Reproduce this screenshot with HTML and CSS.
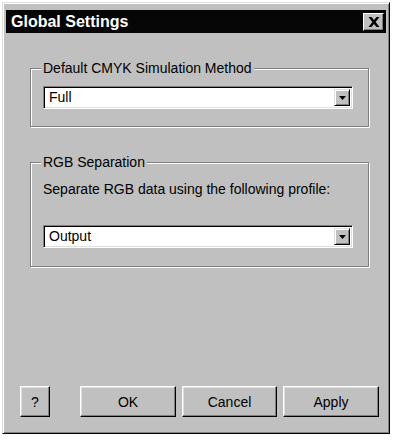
FILE: index.html
```html
<!DOCTYPE html>
<html>
<head>
<meta charset="utf-8">
<link rel="stylesheet" href="styles.css">
</head>
<body>
<div class="window">
  <div class="titlebar">
    <span class="title">Global Settings</span>
    <button class="close" type="button">
      <svg width="12" height="10" viewBox="0 0 12 10"><path d="M0.5 0h3l2.5 3 2.5-3h3L7.6 5l3.9 5h-3L6 7 3.5 10h-3l3.9-5z" fill="#000"/></svg>
    </button>
  </div>
  <div class="body">
    <div class="group g1">
      <span class="legend">Default CMYK Simulation Method</span>
      <div class="combo">
        <span class="value">Full</span>
        <span class="arrow"><svg width="7" height="4" viewBox="0 0 7 4"><path d="M0 0h7L3.5 4z" fill="#000"/></svg></span>
      </div>
    </div>
    <div class="group g2">
      <span class="legend">RGB Separation</span>
      <p class="desc">Separate RGB data using the following profile:</p>
      <div class="combo">
        <span class="value">Output</span>
        <span class="arrow"><svg width="7" height="4" viewBox="0 0 7 4"><path d="M0 0h7L3.5 4z" fill="#000"/></svg></span>
      </div>
    </div>
    <div class="buttons">
      <button class="btn help" type="button">?</button>
      <button class="btn ok" type="button">OK</button>
      <button class="btn cancel" type="button">Cancel</button>
      <button class="btn apply" type="button">Apply</button>
    </div>
  </div>
</div>
</body>
</html>
```
FILE: styles.css
```css
html, body {
  margin: 0;
  padding: 0;
  background: #fff;
}
body {
  font-family: "Liberation Sans", Arial, sans-serif;
  font-size: 14px;
  color: #000;
}
.window {
  margin: 2px 0 0 2px;
  width: 388px;
  height: 432px;
  box-sizing: border-box;
  background: #c0c0c0;
  border-top: 1px solid #dfdfdf;
  border-left: 1px solid #dfdfdf;
  border-right: 1px solid #000;
  border-bottom: 1px solid #000;
  box-shadow: inset 1px 1px 0 #fff, inset -1px -1px 0 #808080;
  padding: 7px 3px 3px 3px;
  display: flex;
  flex-direction: column;
}
.titlebar {
  height: 23px;
  background: #060606;
  display: flex;
  align-items: center;
  justify-content: space-between;
  padding: 0 2px 0 5px;
}
.title {
  color: #fff;
  font-weight: bold;
  font-size: 16px;
}
.close {
  width: 21px;
  height: 18px;
  padding: 0;
  margin: 0;
  background: #c0c0c0;
  border-top: 1px solid #fff;
  border-left: 1px solid #fff;
  border-right: 1px solid #000;
  border-bottom: 1px solid #000;
  box-shadow: inset -1px -1px 0 #808080;
  display: flex;
  align-items: center;
  justify-content: center;
}
.body {
  flex: 1;
  display: flex;
  flex-direction: column;
  padding: 0 17px 0 24px;
}
.group {
  position: relative;
  border: 1px solid #808080;
  box-shadow: 1px 1px 0 #fff, inset 1px 1px 0 #fff;
  padding: 0 15px 0 12px;
  box-sizing: border-box;
}
.g1 {
  margin-top: 35px;
  height: 59px;
  padding-top: 17px;
}
.g2 {
  margin-top: 35px;
  height: 105px;
  padding-top: 18px;
}
.legend {
  position: absolute;
  top: -9px;
  left: 10px;
  padding: 0 2px;
  background: #c0c0c0;
  line-height: 16px;
}
.desc {
  margin: 0 0 28px 0;
  line-height: 16px;
  height: 16px;
}
.combo {
  height: 23px;
  box-sizing: border-box;
  background: #fff;
  border-top: 1px solid #808080;
  border-left: 1px solid #808080;
  border-right: 1px solid #fff;
  border-bottom: 1px solid #fff;
  box-shadow: inset 1px 1px 0 #000, inset -1px -1px 0 #dfdfdf;
  display: flex;
  align-items: center;
  padding: 2px;
}
.value {
  flex: 1;
  padding-left: 3px;
  line-height: 17px;
}
.arrow {
  width: 16px;
  height: 17px;
  box-sizing: border-box;
  background: #c0c0c0;
  border-top: 1px solid #dfdfdf;
  border-left: 1px solid #dfdfdf;
  border-right: 1px solid #000;
  border-bottom: 1px solid #000;
  box-shadow: inset 1px 1px 0 #fff, inset -1px -1px 0 #808080;
  display: flex;
  align-items: center;
  justify-content: center;
}
.buttons {
  margin-top: auto;
  margin-bottom: 13px;
  margin-left: -10px;
  margin-right: -10px;
  display: flex;
  gap: 6px;
}
.btn {
  flex-shrink: 0;
  height: 31px;
  padding: 0;
  margin: 0;
  font-family: "Liberation Sans", Arial, sans-serif;
  font-size: 14px;
  color: #000;
  background: #c0c0c0;
  border-top: 1px solid #fff;
  border-left: 1px solid #fff;
  border-right: 1px solid #000;
  border-bottom: 1px solid #000;
  box-shadow: inset -1px -1px 0 #808080, inset 1px 1px 0 #dfdfdf;
}
.help { width: 30px; margin-right: 24px; }
.ok { width: 96px; }
.cancel { width: 95px; }
.apply { width: 96px; }
```
